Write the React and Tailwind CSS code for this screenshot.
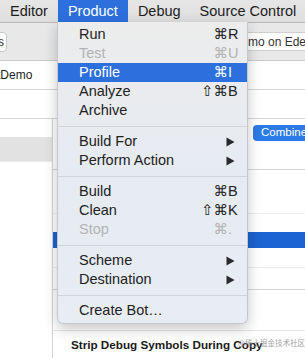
import React from "react";

const Arrow = () => (
  <svg width="9" height="10" viewBox="0 0 9 10" className="mr-[2px]">
    <path d="M0.5 0.5 L8.5 5 L0.5 9.5 Z" fill="#2a2a2a" />
  </svg>
);

function Item({ label, mod, keyc, arrow, disabled, active }) {
  const color = active ? "text-white" : disabled ? "text-[#b3b3b3]" : "text-[#222222]";
  return (
    <div
      className={`flex h-[19px] items-center pl-[21px] pr-[10px] ${color} ${
        active ? "bg-[#2d6fdc]" : ""
      }`}
    >
      <span className="whitespace-nowrap">{label}</span>
      <div className="ml-auto flex items-center">
        {keyc ? (
          <>
            <span className="text-right">{mod}</span>
            <span className="w-[9px] text-left">{keyc}</span>
          </>
        ) : null}
        {arrow ? <Arrow /> : null}
      </div>
    </div>
  );
}

const Sep = () => (
  <div className="flex h-[12px] items-center">
    <div className="h-px w-full bg-[#d2d4d8]" />
  </div>
);

export default function App() {
  return (
    <div className="relative h-[358px] w-[305px] overflow-hidden bg-white font-['Liberation_Sans','DejaVu_Sans',sans-serif] text-[14.5px] leading-none text-[#222]">
      {/* Menu bar */}
      <div className="flex h-[22px] items-center overflow-hidden whitespace-nowrap bg-gradient-to-b from-[#e6e6e6] to-[#dedede] text-[#1d1d1d]">
        <div className="flex h-full shrink-0 items-center px-[10px]">Editor</div>
        <div className="flex h-full shrink-0 items-center bg-[#2d6fdc] px-[10px] text-white">Product</div>
        <div className="flex h-full shrink-0 items-center px-[10px]">Debug</div>
        <div className="flex h-full shrink-0 items-center px-[9px]">Source Control</div>
      </div>

      {/* Toolbar */}
      <div className="flex h-[39px] items-center border-b border-t border-b-[#c9c9c9] border-t-[#b9b9b9] bg-[#e8e8e8]">
        <div className="-ml-[10px] flex h-[20px] w-[17px] shrink-0 items-center justify-end rounded-[4px] border border-[#c8c8c8] bg-white pr-[2px] text-[12px] text-[#333]">
          s
        </div>
        <div className="ml-auto flex h-[19px] w-[66px] shrink-0 items-center overflow-hidden whitespace-nowrap rounded-l-[4px] border border-r-0 border-[#cfcfcf] bg-white pl-[8px] text-[12px] text-[#333]">
          mo on Eden's iPhone
        </div>
      </div>

      {/* Full-width rows */}
      <div className="flex h-[29px] items-center overflow-hidden whitespace-nowrap border-b border-[#d6d6d6] bg-white text-[12px] text-[#222]">
        <span className="-ml-[3px]">tDemo</span>
      </div>
      <div className="h-[29px] border-b border-[#d6d6d6] bg-white" />

      {/* Split area */}
      <div className="flex">
        <div className="w-[52px] shrink-0">
          <div className="h-[18px] bg-white" />
          <div className="h-[25px] border-b border-[#ececec] bg-[#e2e2e2]" />
        </div>
        <div className="h-[240px] w-px shrink-0 bg-[#d3d3d3]" />
        <div className="min-w-0 flex-1 overflow-hidden">
          <div className="h-[31px] pt-[6px]">
            <div className="ml-[200px] flex h-[16px] w-[80px] items-center whitespace-nowrap rounded-l-[4px] bg-[#2b7ae6] pl-[8px] text-[11.5px] text-white">
              Combined
            </div>
          </div>
          <div className="h-[20px] border-b border-[#d5d5d5]" />
          <div className="h-[44px] border-b border-[#eeeeee]" />
          <div className="h-[18px]" />
          <div className="h-[16px] bg-[#1c64d1]" />
          <div className="h-[20px] border-b border-[#ededed]" />
          <div className="h-[22px] border-b border-[#d5d5d5]" />
          <div className="h-[41px] whitespace-nowrap border-b border-[#e6e6e6] pl-[18px] pt-[22px] text-[11.7px] font-bold text-[#222]">
            Generate Debug Symbols
          </div>
          <div className="flex h-[28px] items-center whitespace-nowrap pl-[18px] text-[11.7px] font-bold text-[#1a1a1a]">
            Strip Debug Symbols During Copy
          </div>
        </div>
      </div>

      {/* Watermark */}
      <div className="absolute left-[238px] top-[339px] whitespace-nowrap font-['Noto_Sans_CJK_SC',sans-serif] text-[7.5px] text-[#8a8a8a] opacity-80">
        @稀土掘金技术社区
      </div>

      {/* Dropdown menu */}
      <div className="absolute left-[57px] top-[22px] h-[302px] w-[191px] rounded-b-[6px] border border-t-0 border-[#c4c7cc] bg-gradient-to-b from-[#ececec] via-[#e6ebf2] to-[#e8edf3] pt-[3px] shadow-[0_5px_14px_rgba(0,0,0,0.22)]">
        <Item label="Run" mod="⌘" keyc="R" />
        <Item label="Test" mod="⌘" keyc="U" disabled />
        <Item label="Profile" mod="⌘" keyc="I" active />
        <Item label="Analyze" mod="⇧⌘" keyc="B" />
        <Item label="Archive" />
        <Sep />
        <Item label="Build For" arrow />
        <Item label="Perform Action" arrow />
        <Sep />
        <Item label="Build" mod="⌘" keyc="B" />
        <Item label="Clean" mod="⇧⌘" keyc="K" />
        <Item label="Stop" mod="⌘" keyc="." disabled />
        <Sep />
        <Item label="Scheme" arrow />
        <Item label="Destination" arrow />
        <Sep />
        <Item label="Create Bot…" />
      </div>
    </div>
  );
}
